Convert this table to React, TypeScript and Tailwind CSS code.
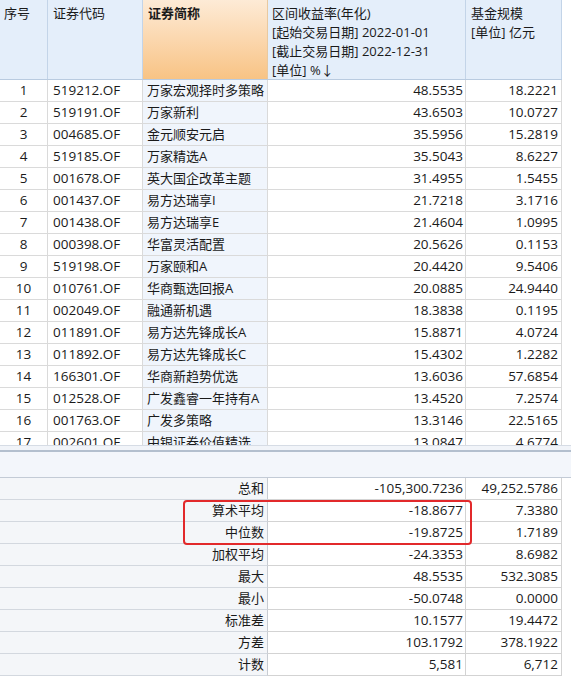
import React from 'react'

type Row = [string, string, string, string]

const rows: Row[] = [
  ['519212.OF', '万家宏观择时多策略', '48.5535', '18.2221'],
  ['519191.OF', '万家新利', '43.6503', '10.0727'],
  ['004685.OF', '金元顺安元启', '35.5956', '15.2819'],
  ['519185.OF', '万家精选A', '35.5043', '8.6227'],
  ['001678.OF', '英大国企改革主题', '31.4955', '1.5455'],
  ['001437.OF', '易方达瑞享I', '21.7218', '3.1716'],
  ['001438.OF', '易方达瑞享E', '21.4604', '1.0995'],
  ['000398.OF', '华富灵活配置', '20.5626', '0.1153'],
  ['519198.OF', '万家颐和A', '20.4420', '9.5406'],
  ['010761.OF', '华商甄选回报A', '20.0885', '24.9440'],
  ['002049.OF', '融通新机遇', '18.3838', '0.1195'],
  ['011891.OF', '易方达先锋成长A', '15.8871', '4.0724'],
  ['011892.OF', '易方达先锋成长C', '15.4302', '1.2282'],
  ['166301.OF', '华商新趋势优选', '13.6036', '57.6854'],
  ['012528.OF', '广发鑫睿一年持有A', '13.4520', '7.2574'],
  ['001763.OF', '广发多策略', '13.3146', '22.5165'],
  ['002601.OF', '中银证券价值精选', '13.0847', '4.6774'],
]

const stats: [string, string, string][] = [
  ['总和', '-105,300.7236', '49,252.5786'],
  ['算术平均', '-18.8677', '7.3380'],
  ['中位数', '-19.8725', '1.7189'],
  ['加权平均', '-24.3353', '8.6982'],
  ['最大', '48.5535', '532.3085'],
  ['最小', '-50.0748', '0.0000'],
  ['标准差', '10.1577', '19.4472'],
  ['方差', '103.1792', '378.1922'],
  ['计数', '5,581', '6,712'],
]

const font = "font-['Open_Sans','Noto_Sans_CJK_SC',sans-serif]"

export default function App() {
  return (
    <div className={`relative h-[684px] w-[571px] overflow-hidden bg-white text-[13px] text-[#1a1a1a] ${font}`}>
      {/* header */}
      <div className="flex h-[80px] w-[562px] border-b border-[#b9cbe0]">
        <div className="w-[48px] border-r border-[#c3d4e8] bg-[#e4eefa] pl-[4px] pt-[4px] leading-[19px]">序号</div>
        <div className="w-[95px] border-r border-[#c3d4e8] bg-[#e4eefa] pl-[5px] pt-[4px] leading-[19px]">证券代码</div>
        <div className="w-[125px] border-r border-[#e8c9a0] bg-gradient-to-b from-[#fdebd6] to-[#f8c384] pl-[5px] pt-[4px] font-bold leading-[19px]">
          证券简称
        </div>
        <div className="w-[198px] border-r border-[#c3d4e8] bg-[#e4eefa] pl-[4px] pt-[4px] leading-[19px]">
          <div>区间收益率(年化)</div>
          <div>[起始交易日期] 2022-01-01</div>
          <div>[截止交易日期] 2022-12-31</div>
          <div>[单位] %↓</div>
        </div>
        <div className="w-[96px] border-r border-[#c3d4e8] bg-[#e4eefa] pl-[5px] pt-[4px] leading-[19px]">
          <div>基金规模</div>
          <div>[单位] 亿元</div>
        </div>
      </div>

      {/* body */}
      <div className="h-[365px] overflow-hidden">
        {rows.map((r, i) => (
          <div key={r[0]} className="flex h-[22px] w-[562px]">
            <div className="flex w-[48px] items-center justify-center border-r border-b border-[#dadada] text-[13.5px]">{i + 1}</div>
            <div className="flex w-[95px] items-center border-r border-b border-[#dadada] pl-[5px] text-[13.5px]">{r[0]}</div>
            <div className="flex w-[125px] items-center whitespace-nowrap border-r border-b border-[#dadada] bg-[#f0f5fc] pl-[4px]">{r[1]}</div>
            <div className="flex w-[198px] items-center justify-end border-r border-b border-[#dadada] pr-[2px] text-[13.5px]">{r[2]}</div>
            <div className="flex w-[96px] items-center justify-end border-r border-b border-[#dadada] pr-[3px] text-[13.5px]">{r[3]}</div>
          </div>
        ))}
      </div>
      <div className="h-[5px] border-t border-[#d6dce5] bg-[#f1f4f9]" />

      {/* separator */}
      <div className="h-[28px] border-t-2 border-b border-t-[#b3bfce] border-b-[#c3cbd6] bg-[#f3f6fb]" />

      {/* summary */}
      <div>
        {stats.map((s) => (
          <div key={s[0]} className="flex h-[22px]">
            <div className="flex w-[268px] items-center justify-end border-r border-b border-r-[#c8ccd2] border-b-[#d3d8df] bg-[#f4f6f9] pr-[3px]">{s[0]}</div>
            <div className="flex w-[198px] items-center justify-end border-r border-b border-[#d3d3d3] pr-[2px] text-[13.5px]">{s[1]}</div>
            <div className="flex w-[96px] items-center justify-end border-r border-b border-[#d3d3d3] pr-[3px] text-[13.5px]">{s[2]}</div>
          </div>
        ))}
      </div>

      {/* highlight box */}
      <div className="absolute left-[183px] top-[500px] h-[45px] w-[289px] rounded-[4px] border-2 border-[#e2292b]" />
    </div>
  )
}
